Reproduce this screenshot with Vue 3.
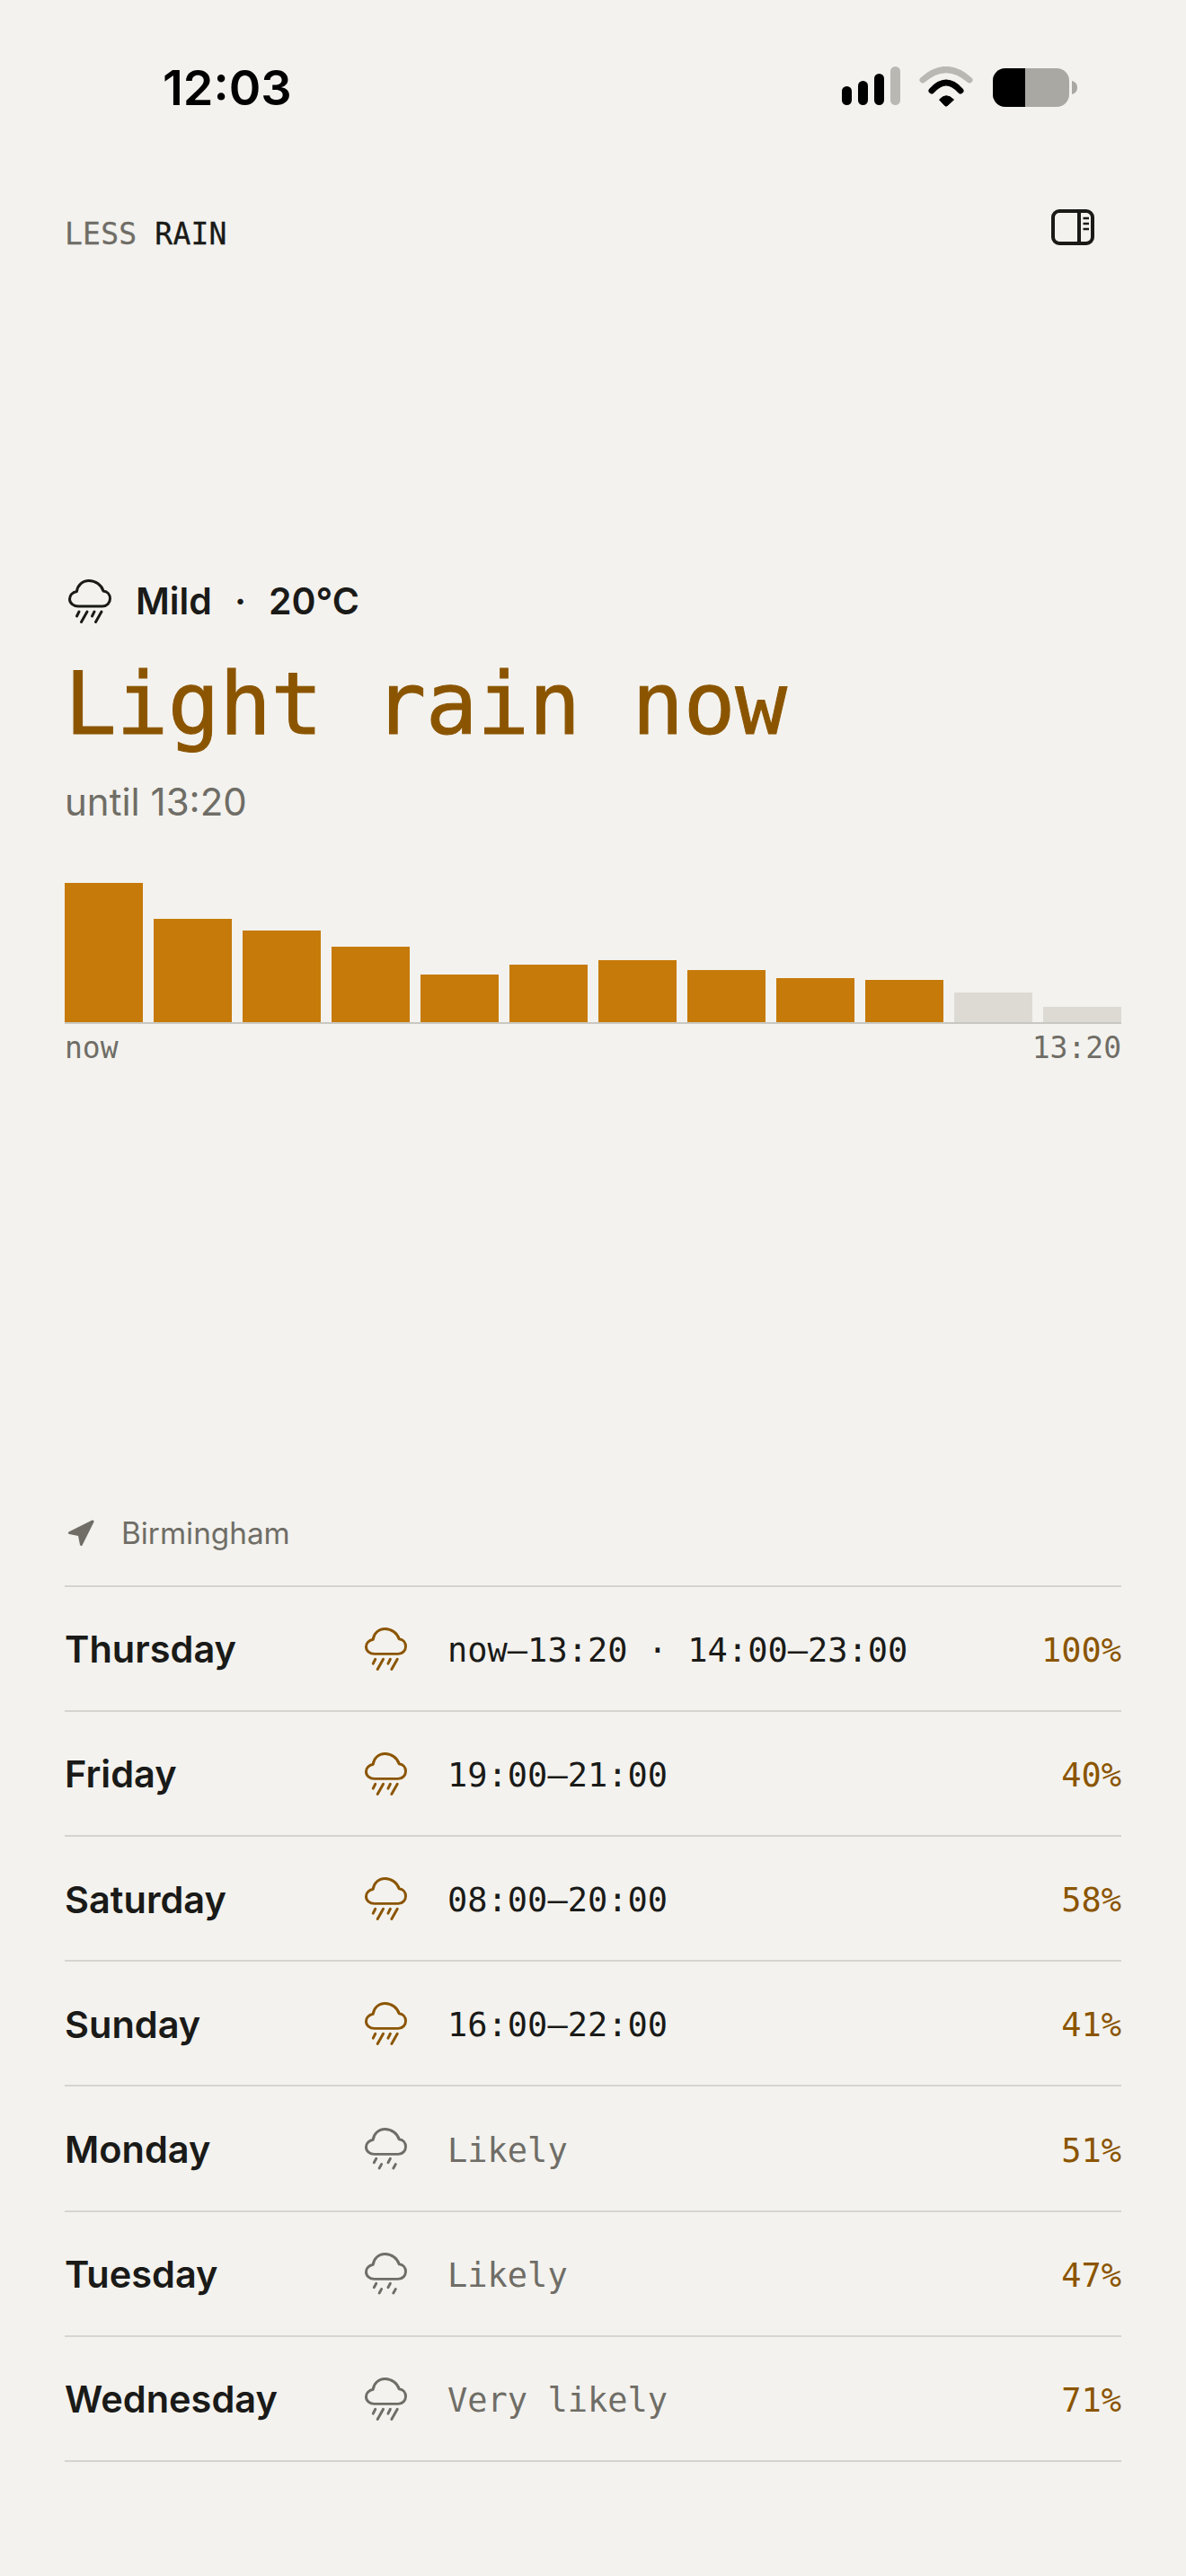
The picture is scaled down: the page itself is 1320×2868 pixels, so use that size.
<script setup>
const bars = [155, 115, 102, 84, 53, 64, 69, 58, 49, 47, 33, 17];
const activeBars = 10;

const heavyRain = ['M12 36 9.5 41', 'M21 36 14.5 47.5', 'M29 36 26.5 41', 'M37 36 30.5 47.5'];
const lightRain = ['M13 35 10.5 39.5', 'M19 41.5 16.5 46', 'M29 35 26.5 39.5', 'M35 41.5 32.5 46'];

const days = [
  { name: 'Thursday', hours: 'now—13:20 · 14:00—23:00', chance: '100%', rain: heavyRain, on: true },
  { name: 'Friday', hours: '19:00—21:00', chance: '40%', rain: heavyRain, on: true },
  { name: 'Saturday', hours: '08:00—20:00', chance: '58%', rain: heavyRain, on: true },
  { name: 'Sunday', hours: '16:00—22:00', chance: '41%', rain: heavyRain, on: true },
  { name: 'Monday', hours: 'Likely', chance: '51%', rain: lightRain, on: false },
  { name: 'Tuesday', hours: 'Likely', chance: '47%', rain: lightRain, on: false },
  { name: 'Wednesday', hours: 'Very likely', chance: '71%', rain: heavyRain, on: false },
];

const cloud = 'M11 30H38C43 30 46.5 26 46.5 21.5C46.5 17 43.5 13.5 39 13C37 6.5 30.5 1.5 23 1.5C15.5 1.5 10 7 9.5 13.5C4.5 14.5 1.5 18 1.5 22C1.5 26.5 5.5 30 11 30Z';
</script>

<template>
  <div class="page">
    <div class="status">
      <span class="time">12:03</span>
      <div class="statusIcons">
        <svg class="signal" width="65" height="43" viewBox="0 0 65 43">
          <rect x="0" y="22" width="11" height="21" rx="5.5" />
          <rect x="18" y="16" width="11" height="27" rx="5.5" />
          <rect x="36" y="8" width="11" height="35" rx="5.5" />
          <rect class="dim" x="54" y="0" width="11" height="43" rx="5.5" />
        </svg>
        <svg class="wifi" width="60" height="45" viewBox="0 0 60 45">
          <path class="arcDim" d="M4 15Q30-8 56 15" />
          <path class="arc" d="M14 27Q30 9 46 27" />
          <path class="tip" d="M22.5 37Q30 28.5 38.5 37L31.5 43.5Q30 44.8 28.5 43.5Z" />
        </svg>
        <svg class="battery" width="94" height="43" viewBox="0 0 94 43">
          <rect class="batteryBody" x="0" y="0" width="85" height="43" rx="14" />
          <path d="M14 0H36V43H14A14 14 0 0 1 0 29V14A14 14 0 0 1 14 0Z" />
          <path class="batteryBody" d="M88 14C92 15 94 18 94 21.5C94 25 92 28 88 29Z" />
        </svg>
      </div>
    </div>

    <header class="top">
      <span class="brand"><span class="brandLess">LESS</span> RAIN</span>
      <svg class="panel" width="48" height="40" viewBox="0 0 48 40" fill="none">
        <rect x="2" y="2" width="44" height="36" rx="7" stroke="#1a1a18" stroke-width="4" />
        <path d="M31 2V38" stroke="#1a1a18" stroke-width="4" />
        <path d="M35.5 10H42M35.5 16H42M35.5 22H42" stroke="#1a1a18" stroke-width="2.5" />
      </svg>
    </header>

    <section class="hero">
      <div class="summary">
        <svg class="rainIcon summaryIcon" viewBox="0 0 48 48" fill="none">
          <path :d="cloud" />
          <path v-for="line in heavyRain" :key="line" :d="line" />
        </svg>
        <span>Mild</span>
        <span class="dot">·</span>
        <span>20°C</span>
      </div>
      <h1 class="headline">Light rain now</h1>
      <p class="until">until 13:20</p>

      <div class="chart">
        <div
          v-for="(height, i) in bars"
          :key="i"
          class="bar"
          :class="{ barOff: i >= activeBars }"
          :style="{ height: height + 'px' }"
        ></div>
      </div>
      <div class="axis">
        <span>now</span>
        <span>13:20</span>
      </div>
    </section>

    <section class="forecast">
      <div class="location">
        <svg width="30" height="30" viewBox="0 0 30 30">
          <path d="M1.5 13.5 27.5.5Q30 0 29.5 2.5L16.5 28.5Q15 30 14 28L12 18 2 16Q0 15 1.5 13.5Z" fill="#6f6d66" />
        </svg>
        <span>Birmingham</span>
      </div>
      <div class="rows">
        <div v-for="day in days" :key="day.name" class="row">
          <span class="dayName">{{ day.name }}</span>
          <svg class="rainIcon" :class="day.on ? 'iconOn' : 'iconOff'" viewBox="0 0 48 48" fill="none">
            <path :d="cloud" />
            <path v-for="line in day.rain" :key="line" :d="line" />
          </svg>
          <span class="hours" :class="{ hoursOff: !day.on }">{{ day.hours }}</span>
          <span class="chance">{{ day.chance }}</span>
        </div>
      </div>
    </section>
  </div>
</template>

<style>
body {
  background: #f3f2ee;
}
</style>

<style scoped>
.page {
  background: #f3f2ee;
  box-sizing: border-box;
  color: #1a1a18;
  display: flex;
  flex-direction: column;
  font-family: Inter, "Noto Sans", sans-serif;
  height: 2868px;
  overflow: hidden;
  padding: 0 72px;
  width: 1320px;
}

.status {
  align-items: flex-start;
  display: flex;
  height: 233px;
  justify-content: space-between;
}

.time {
  color: #000;
  font-size: 54px;
  font-weight: 600;
  line-height: 66px;
  margin: 65px 0 0 109px;
}

.statusIcons {
  align-items: flex-start;
  display: flex;
  margin: 74px 49px 0 0;
}

.signal {
  fill: #000;
}

.signal .dim {
  fill: #b9b8b3;
}

.wifi {
  margin-left: 21px;
}

.arc,
.arcDim {
  fill: none;
  stroke: #000;
  stroke-linecap: round;
  stroke-width: 7;
}

.arcDim {
  stroke: #b9b8b3;
}

.tip {
  fill: #000;
  stroke: #000;
  stroke-linejoin: round;
}

.battery {
  fill: #000;
  margin: 2px 0 0 22px;
}

.battery .batteryBody {
  fill: #a9a8a3;
}

.top {
  align-items: flex-start;
  display: flex;
  justify-content: space-between;
  padding-right: 30px;
}

.brand {
  font-family: "DejaVu Sans Mono", monospace;
  font-size: 33px;
  letter-spacing: 0.2px;
  line-height: 40px;
  margin-top: 8px;
  -webkit-text-stroke: 0.3px currentColor;
}

.brandLess {
  color: #6f6d66;
}

.hero {
  margin-top: 363px;
}

.summary {
  align-items: center;
  display: flex;
  font-size: 41px;
  font-weight: 600;
  height: 50px;
}

.summary span:first-of-type {
  margin-left: 27px;
}

.dot {
  margin: 0 25px;
}

.rainIcon {
  height: 48px;
  overflow: visible;
  stroke: currentColor;
  stroke-linecap: round;
  stroke-linejoin: round;
  stroke-width: 3;
  width: 48px;
}

.summaryIcon {
  margin-left: 4px;
}

.iconOn {
  color: #8b5500;
}

.iconOff {
  color: #6f6d66;
}

.headline {
  color: #8b5500;
  font-family: "DejaVu Sans Mono", monospace;
  font-size: 96px;
  font-weight: 400;
  letter-spacing: -0.4px;
  line-height: 110px;
  margin: 35px 0 0;
  -webkit-text-stroke: 1px #8b5500;
}

.until {
  color: #6f6d66;
  font-size: 42px;
  line-height: 50px;
  margin: 29px 0 0;
}

.chart {
  align-items: flex-end;
  border-bottom: 2px solid #c9c7c1;
  display: flex;
  gap: 12px;
  height: 156px;
  margin-top: 64px;
}

.bar {
  background: #c67a0a;
  flex: 1;
}

.barOff {
  background: #dddad4;
}

.axis {
  color: #6f6d66;
  display: flex;
  font-family: "DejaVu Sans Mono", monospace;
  font-size: 33px;
  justify-content: space-between;
  line-height: 40px;
  margin-top: 7px;
}

.forecast {
  margin-top: auto;
  padding-bottom: 127px;
}

.location {
  align-items: center;
  color: #6f6d66;
  display: flex;
  font-size: 33.3px;
  gap: 30px;
  height: 44px;
  margin-bottom: 36px;
  padding-left: 3px;
}

.rows {
  border-top: 2px solid #d6d4cf;
}

.row {
  align-items: center;
  border-bottom: 2px solid #d6d4cf;
  display: grid;
  grid-template-columns: 334px 47px 1fr auto;
  height: 137.2px;
}

.dayName {
  font-size: 41.5px;
  font-weight: 600;
  padding-top: 2px;
}

.row .rainIcon {
  height: 47px;
  width: 47px;
}

.hours,
.chance {
  font-family: "DejaVu Sans Mono", monospace;
  font-size: 37px;
  padding-top: 4px;
}

.hours {
  padding-left: 45px;
}

.hoursOff {
  color: #6f6d66;
}

.chance {
  color: #8b5500;
}
</style>
